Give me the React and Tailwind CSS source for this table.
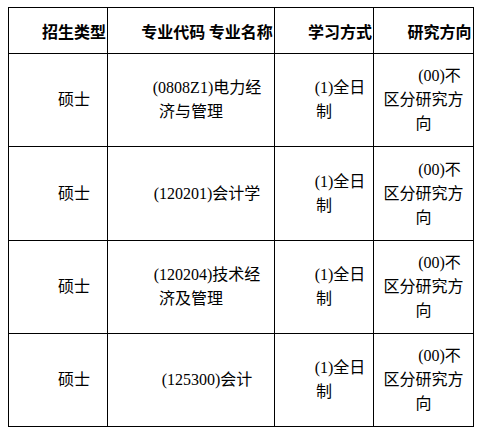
import React from "react";

const rows = [
  ["硕士", "(0808Z1)电力经济与管理", "(1)全日制", "(00)不区分研究方向"],
  ["硕士", "(120201)会计学", "(1)全日制", "(00)不区分研究方向"],
  ["硕士", "(120204)技术经济及管理", "(1)全日制", "(00)不区分研究方向"],
  ["硕士", "(125300)会计", "(1)全日制", "(00)不区分研究方向"],
];
const heights = ["h-[93px]", "h-[94px]", "h-[93px]", "h-[93px]"];

export default function App() {
  const font = { fontFamily: '"Liberation Serif", "Noto Sans CJK SC", serif' };
  const base = "border border-black py-0 align-middle text-center indent-8 text-[16px] leading-[24px] text-black";
  return (
    <div className="bg-white w-[478px] h-[437px] pl-[8px] pt-[7px]" style={font}>
      <table className="border-collapse table-fixed w-[465px]">
        <colgroup>
          <col className="w-[99px]" />
          <col className="w-[167px]" />
          <col className="w-[99px]" />
          <col className="w-[100px]" />
        </colgroup>
        <thead>
          <tr className="h-[46px]">
            {["招生类型", "专业代码 专业名称", "学习方式", "研究方向"].map((h) => (
              <th
                key={h}
                className={base + " px-0 font-bold whitespace-nowrap"}
                style={{ fontFamily: '"Noto Sans CJK SC", sans-serif' }}
              >
                {h}
              </th>
            ))}
          </tr>
        </thead>
        <tbody>
          {rows.map((r, i) => (
            <tr key={i} className={heights[i]}>
              {r.map((c, j) => (
                <td key={j} className={base + " px-[7px]"}>
                  {c}
                </td>
              ))}
            </tr>
          ))}
        </tbody>
      </table>
    </div>
  );
}
